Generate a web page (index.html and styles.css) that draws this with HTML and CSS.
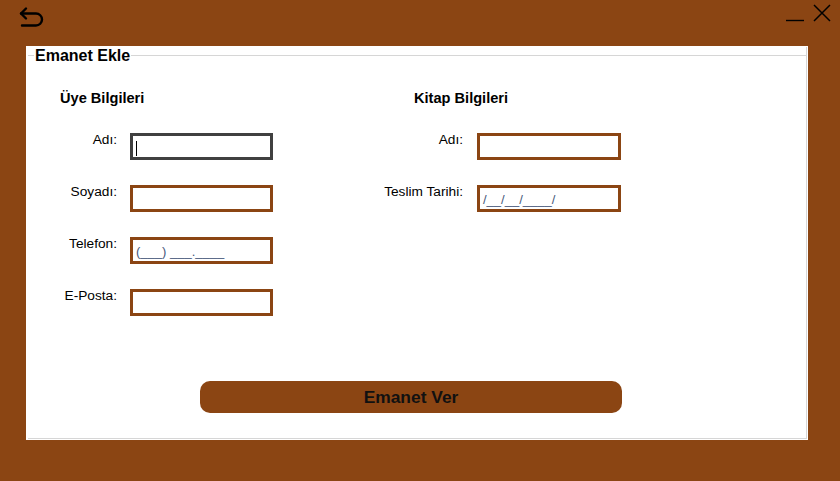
FILE: index.html
```html
<!DOCTYPE html>
<html lang="tr">
<head>
<meta charset="utf-8">
<title>Emanet Ekle</title>
<link rel="stylesheet" href="styles.css">
</head>
<body>
<div class="window">
  <div class="topbar">
    <svg class="back-icon" width="30" height="30" viewBox="0 0 30 30">
      <path d="M10 8.5 L5 13.5 L10 18.5" fill="none" stroke="#000" stroke-width="2.4" stroke-linecap="round" stroke-linejoin="round"/>
      <path d="M5 13.5 H20 A6 6 0 0 1 20 25.5 H6" fill="none" stroke="#000" stroke-width="2.4" stroke-linecap="round"/>
    </svg>
    <svg class="win-controls" width="48" height="30" viewBox="0 0 48 30">
      <path d="M2 20.5 H20" stroke="#000" stroke-width="1.4"/>
      <path d="M30 5 L46 21 M46 5 L30 21" stroke="#000" stroke-width="1.5"/>
    </svg>
  </div>
  <div class="panel">
    <div class="group">
      <div class="legend-row">
        <span class="line line-short"></span>
        <span class="legend">Emanet Ekle</span>
        <span class="line line-long"></span>
      </div>
      <div class="form">
        <div class="heading heading-left">Üye Bilgileri</div>
        <div class="heading heading-right">Kitap Bilgileri</div>

        <div class="label label-left">Adı:</div>
        <div class="field field-focus"><span class="caret"></span></div>
        <div class="label label-right">Adı:</div>
        <div class="field"></div>

        <div class="label label-left">Soyadı:</div>
        <div class="field"></div>
        <div class="label label-right">Teslim Tarihi:</div>
        <div class="field"><span class="mask">/__/__/____/</span></div>

        <div class="label label-left">Telefon:</div>
        <div class="field"><span class="mask">(___) ___.____</span></div>
        <div class="spacer"></div>
        <div class="spacer"></div>

        <div class="label label-left">E-Posta:</div>
        <div class="field"></div>
        <div class="spacer"></div>
        <div class="spacer"></div>
      </div>
      <div class="actions">
        <button class="submit" type="button">Emanet Ver</button>
      </div>
    </div>
  </div>
</div>
</body>
</html>
```

FILE: styles.css
```css
html, body {
  margin: 0;
  padding: 0;
}

body {
  background: #8b4513;
  font-family: "Liberation Sans", Arial, sans-serif;
  width: 840px;
  height: 481px;
  overflow: hidden;
}

.window {
  display: flex;
  flex-direction: column;
}

.topbar {
  height: 46px;
  display: flex;
  justify-content: space-between;
  align-items: flex-start;
  padding: 0 8px 0 16px;
}

.back-icon,
.win-controls {
  display: block;
}

.panel {
  margin-left: 26px;
  width: 782px;
  height: 394px;
  background: #ffffff;
  box-sizing: border-box;
  padding: 1px 1px 0 2px;
}

.group {
  height: 392px;
  box-sizing: border-box;
  border-right: 1px solid #d6d6d6;
  border-bottom: 1px solid #d6d6d6;
  display: flex;
  flex-direction: column;
}

.legend-row {
  display: flex;
  align-items: flex-start;
  height: 18px;
}

.line {
  height: 1px;
  margin-top: 8px;
  background: #d6d6d6;
}

.line-short {
  width: 6px;
}

.line-long {
  flex: 1;
}

.legend {
  font-size: 16px;
  font-weight: bold;
  line-height: 18px;
  padding: 0 1px;
  color: #000;
}

.form {
  margin-top: 25px;
  display: grid;
  grid-template-columns: 102px 143px 204px 144px;
  grid-template-rows: 18px 27px 27px 27px 27px;
  row-gap: 25px;
}

.heading {
  font-size: 14.6px;
  font-weight: bold;
  line-height: 16px;
  color: #000;
}

.heading-left {
  grid-column: 1 / 3;
  padding-left: 32px;
}

.heading-right {
  grid-column: 3 / 5;
  padding-left: 141px;
}

.label {
  font-size: 13.7px;
  line-height: 15px;
  text-align: right;
  color: #000;
  margin-top: -1px;
}

.label-left {
  padding-right: 13px;
}

.label-right {
  padding-right: 14px;
}

.field {
  box-sizing: border-box;
  height: 27px;
  border: 3px solid #8b4513;
  background: #fff;
  padding: 3px 3px 0 3px;
  font-size: 13px;
  line-height: 15px;
  display: flex;
  align-items: flex-start;
}

.field-focus {
  border-color: #404040;
}

.caret {
  display: block;
  width: 1px;
  height: 15px;
  margin-top: 2px;
  background: #000;
}

.mask {
  color: #46587a;
  padding-top: 1px;
  white-space: pre;
}

.actions {
  margin-top: 65px;
  padding-left: 172px;
}

.submit {
  display: flex;
  align-items: center;
  justify-content: center;
  width: 422px;
  height: 32px;
  border: none;
  border-radius: 10px;
  background: #8b4513;
  color: #111;
  font-family: "Liberation Sans", Arial, sans-serif;
  font-size: 17.4px;
  font-weight: bold;
  padding: 0;
  margin: 0;
}
```
